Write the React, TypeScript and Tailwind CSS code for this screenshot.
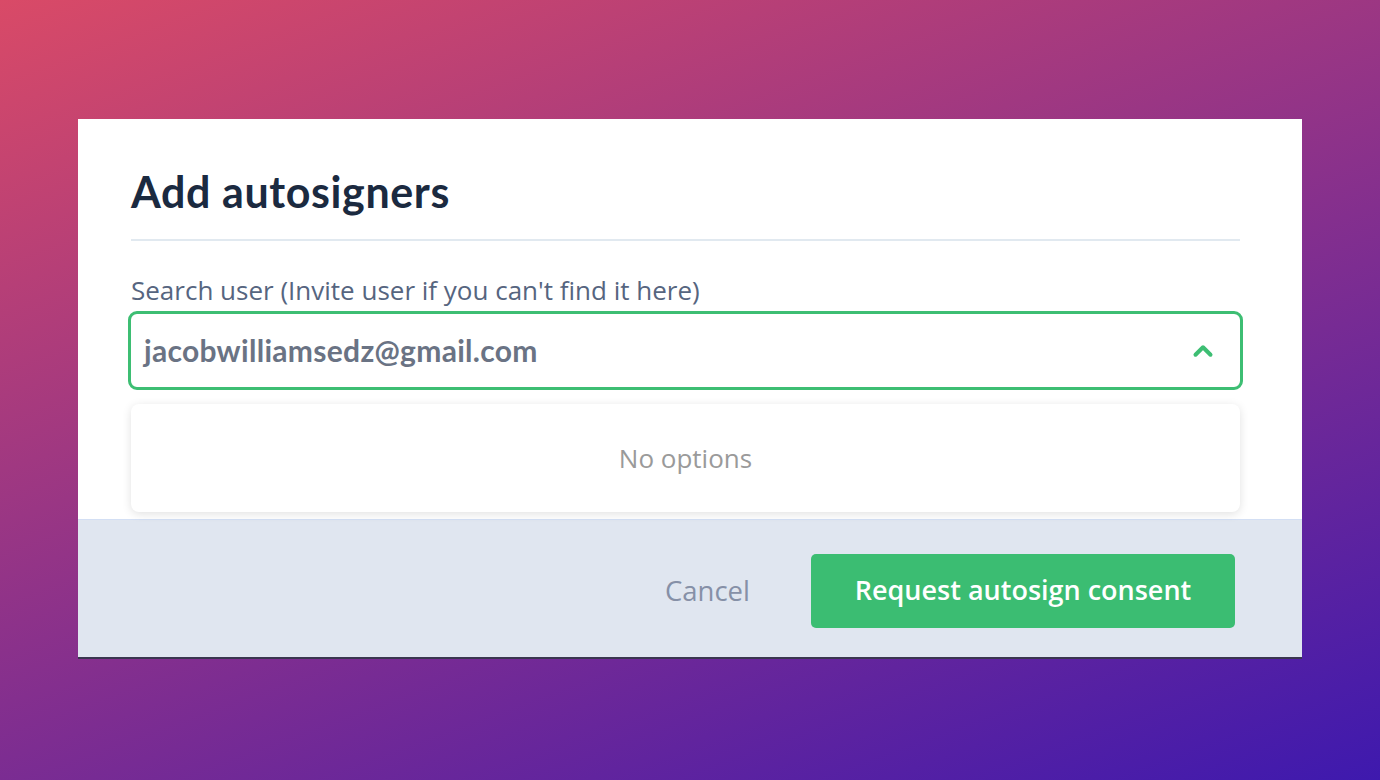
import { ChevronUp } from 'lucide-react';

export default function App() {
  return (
    <div className="h-[780px] w-[1380px] overflow-hidden bg-[linear-gradient(160deg,#d94a67,#3e19ae)] pt-[119px] pl-[78px] font-['Lato',sans-serif]">
      <div className="w-[1224px] bg-white shadow-[0_2px_0_#3a3650]">
        <div className="relative h-[400px] pt-[45px] pr-[62px] pl-[53px]">
          <h2 className="text-[43px] leading-[56px] font-bold tracking-[0.6px] text-[#1b2a40]">Add autosigners</h2>
          <div className="mt-[19px] h-[2px] bg-[#e1e9f0]" />
          <label className="mt-[33px] block font-['Open_Sans',sans-serif] text-[26px] leading-[33px] text-[#56657f]">
            Search user (Invite user if you can&apos;t find it here)
          </label>
          <div className="relative mt-[4px]">
            <div className="-mx-[3px] flex h-[79px] items-center justify-between rounded-[9px] border-[3px] border-[#3dbe73] pr-[22px] pl-[13px]">
              <span className="text-[30px] font-bold tracking-[0.3px] text-[#6a7384]">jacobwilliamsedz@gmail.com</span>
              <ChevronUp size={30} strokeWidth={3.2} className="text-[#3dbe73]" />
            </div>
            <div className="absolute top-[93px] right-0 left-0 z-10 flex h-[108px] items-center justify-center rounded-lg bg-white shadow-[0_2px_10px_rgba(0,0,0,0.12)]">
              <span className="font-['Open_Sans',sans-serif] text-[26px] text-[#9a9a9a]">No options</span>
            </div>
          </div>
        </div>
        <div className="flex h-[138px] items-center justify-end gap-[61px] border-t border-[#d3dff4] bg-[#e0e6f0] pt-[4px] pr-[67px]">
          <button className="font-['Open_Sans',sans-serif] text-[27.5px] text-[#8690a7]">Cancel</button>
          <button className="h-[74px] w-[424px] rounded-[5px] bg-[#3bbd72] font-['Open_Sans',sans-serif] text-[27px] font-semibold text-white">
            Request autosign consent
          </button>
        </div>
      </div>
    </div>
  );
}
